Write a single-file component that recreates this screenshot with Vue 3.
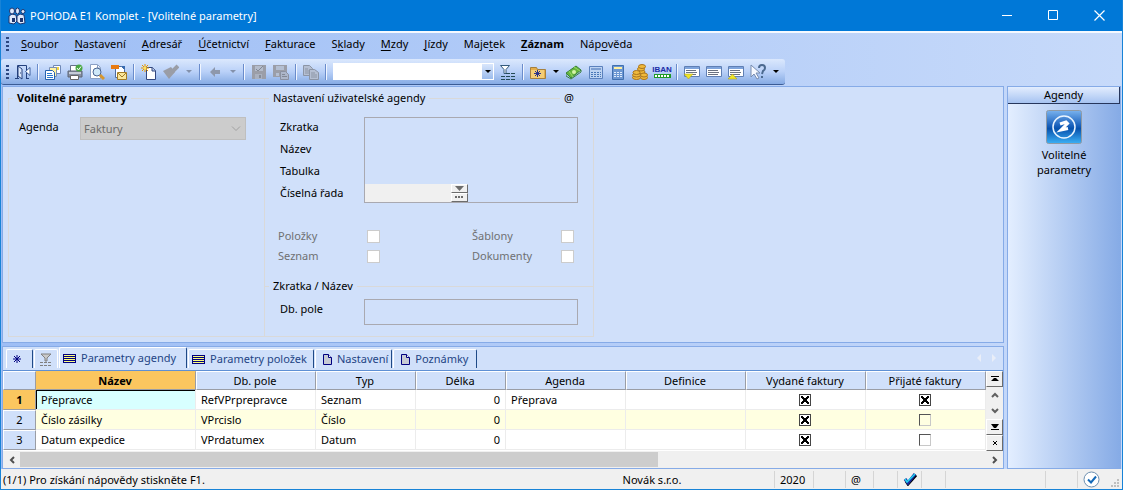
<script setup>
import { ref } from 'vue'

const menu = [
  ['', 'S', 'oubor'], ['', 'N', 'astavení'], ['', 'A', 'dresář'], ['', 'Ú', 'četnictví'],
  ['', 'F', 'akturace'], ['S', 'k', 'lady'], ['', 'M', 'zdy'], ['', 'J', 'ízdy'],
  ['Maje', 't', 'ek'], ['', 'Z', 'áznam'], ['Náp', 'o', 'věda'],
]

const lines = '<path d="M.5 2.500h15v10H.5z" fill="#fff" stroke="#5f7fb4"/><path d="M1 3h14v2H1z" fill="#7fa4dc"/><path d="M2 6.500h10M2 8.500h11M2 10.500h10" stroke="#6b7280"/>'
const icons = {
  exit: '<path d="M0 14.500h4M11 14.500h3M2.500 14V1.500h9V14" fill="none" stroke="#24407c"/><path d="M3 2l4 3v10l-4-3z" fill="#dce8fb" stroke="#24407c"/><path d="M10.500 7.500L15 3.500v8z" fill="#fff" stroke="#3d5f9c"/><path d="M5 9h1" stroke="#24407c"/>',
  copies: '<path d="M8.500 1.500h7v8h-7z" fill="#fff" stroke="#6f88b5"/><path d="M10 3h4v3h-4z" fill="#f3d43c"/><path d="M4.500 3.500h7v9h-7z" fill="#fff3a0" stroke="#7a90b8"/><path d="M.5 6.500h7l2 2v7h-9z" fill="#fff" stroke="#2461ae"/><path d="M2 9.500h5M2 11.500h6M2 13.500h6" stroke="#2878cf"/>',
  print: '<path d="M3.500 1.500h8v6h-8z" fill="#fff" stroke="#66718a"/><path d="M1 7h14v6H1z" fill="#8790a3" stroke="#5c6474"/><path d="M2 8h12v2H2z" fill="#c6ccd8"/><path d="M3.500 11.500h8v4h-8z" fill="#fff" stroke="#666"/><circle cx="12" cy="4" r="3.500" fill="#49a744"/><path d="M10 4l1.500 2L14 2.500" fill="none" stroke="#fff"/>',
  preview: '<path d="M1.500.5h7l3 3v11h-10z" fill="#fff" stroke="#8ba0c4"/><path d="M8.500 1v3h3" fill="none" stroke="#8ba0c4"/><circle cx="8" cy="8" r="4" fill="#cfe8f8" stroke="#4b6592"/><path d="M11 11l4 4" stroke="#d6962d" stroke-width="3"/>',
  mail: '<path d="M4.500 2.500h6l3 3v8h-9z" fill="#fff" stroke="#4b6aa0"/><path d="M0 1h8v4H0z" fill="#e87b12"/><path d="M10 2l4 4v-4z" fill="#376bb1"/><path d="M6.500 8.500h9v7h-9z" fill="#f9e69c" stroke="#a47c24"/><path d="M7 9l4 4 4-4" fill="none" stroke="#a47c24"/>',
  fresh: '<path d="M5.500 3.500h6l3 3v9h-9z" fill="#fff" stroke="#33477f"/><path d="M11 3v4h3.500" fill="#b7c9ea" stroke="#33477f"/><path d="M4 0v8M0 4h8M1 1l6 6M7 1L1 7" stroke="#e69600"/><circle cx="4" cy="4" r="1.500" fill="#ffe35a"/>',
  brush: '<path d="M0 7l8-4 4 5-6 7z" fill="#9a9da6"/><path d="M9 8l6-6" stroke="#9a9da6" stroke-width="4"/>',
  back: '<path d="M3 8l5-5v3h5v4H8v3z" fill="#8e98ac"/>',
  save: '<path d="M1 1h14v14H1z" fill="#9b9ea8"/><path d="M4 2h8v5H4z" fill="#b4bccb"/><path d="M5 5l2 2 5-5" fill="none" stroke="#828894"/><path d="M4 10h7v5H4z" fill="#aab1bf"/><path d="M8 11h2v3H8z" fill="#868c98"/>',
  saveall: '<path d="M0 1h14v12H0z" fill="#9b9ea8"/><path d="M3 2h8v4H3zM3 9h3v3H3z" fill="#b4bfd2"/><path d="M7.500 7.500h5l3 3v5h-8z" fill="#adb6c9" stroke="#8b91a0"/><path d="M9 10.500h3M9 12.500h5" stroke="#828895"/>',
  copy: '<path d="M.5 1.500h6l3 3v7h-9z" fill="#b5bfd2" stroke="#8c95a5"/><path d="M6.500 5.500h5l4 3v7h-9z" fill="#b5bfd2" stroke="#8c95a5"/><path d="M2 5h3M2 7h4M2 9h4M8 9h4M8 11h6M8 13h6" stroke="#8c95a5"/>',
  filter: '<path d="M.5 1.500h9l-3.500 4v4H4V5.500z" fill="#fff" stroke="#355b7c"/><path d="M6 9.500h10M1 12.500h15M1 15.500h15" stroke="#244a55" stroke-dasharray="4 1"/>',
  folder: '<path d="M.5 3.500h6l1 2h8v9H.5z" fill="#e5ae4a" stroke="#a5803f"/><path d="M1 6h13v8H1z" fill="#f3cd76"/><path d="M7.500 6v7M4 9.500h7M5 7l5 5M10 7l-5 5" stroke="#27308a"/>',
  money: '<path d="M0 9L10 2l5 4-10 8z" fill="#65b53d" stroke="#398338"/><path d="M0 10v2l5 3 10-7V6" fill="none" stroke="#39803c"/><circle cx="8" cy="8" r="2" fill="#d5f3a7"/><path d="M3 7l4 6M8 3l6 4" stroke="#99d968"/>',
  calc: '<path d="M1.500 2.500h13v12h-13z" fill="#bdd3f2" stroke="#5b81bd"/><path d="M3 5h10" stroke="#7d9fd2" stroke-width="2"/><path d="M3 8.500h10M3 10.500h10M3 12.500h10" stroke="#4a78b8" stroke-dasharray="2 1"/>',
  calc2: '<path d="M2.500 1.500h11v14h-11z" fill="#6b96d2" stroke="#4070b0"/><path d="M4 4h8" stroke="#fff0a0" stroke-width="2"/><path d="M4 8.500h8M4 10.500h8M4 12.500h8" stroke="#e2eefc" stroke-dasharray="2 1"/>',
  coins: '<g fill="#f0b93a" stroke="#a9741c"><ellipse cx="10" cy="8" rx="3" ry="2"/><ellipse cx="9" cy="5" rx="3.500" ry="2"/><ellipse cx="10" cy="2.500" rx="3.500" ry="2"/><ellipse cx="4.500" cy="13.500" rx="4" ry="2"/><ellipse cx="4.500" cy="11" rx="4" ry="2"/><ellipse cx="4.500" cy="8.500" rx="3.500" ry="2"/><ellipse cx="12" cy="13.500" rx="3.500" ry="2"/><ellipse cx="12" cy="11" rx="3.500" ry="2"/></g>',
  below: lines + '<path d="M0 10h9l-4.500 5z" fill="#efe526" stroke="#a6991a" stroke-width=".5"/>',
  window: lines,
  above: lines + '<path d="M0 15h9l-4.500-5z" fill="#efe526" stroke="#a6991a" stroke-width=".5"/>',
  help: '<path d="M1 1v12l3-3 3 5 2-1-3-5h4z" fill="#f6f9ff" stroke="#778caf"/><path d="M9 4q0-3 3-3t3 3q0 2-2 3l-1 3M12 12v2" fill="none" stroke="#4c6a90" stroke-width="2"/>',
}

const tools = [
  'exit', '|', 'copies', 'print', 'preview', 'mail', '|', 'fresh', 'brush', 'v-', '|', 'back', 'v-', '|',
  'save', 'saveall', '|', 'copy', '|', 'combo', 'filter', '|', 'folder', 'v', 'money', 'calc', 'calc2',
  'coins', 'iban', '|', 'below', 'window', 'above', 'help', 'v',
]
const toolNames = {
  exit: 'Konec', copies: 'Kopie', print: 'Tisk', preview: 'Náhled', mail: 'Odeslat', fresh: 'Nový', brush: 'Formát',
  back: 'Zpět', save: 'Uložit', saveall: 'Uložit vše', copy: 'Kopírovat', filter: 'Filtr', folder: 'Složka',
  money: 'Peníze', calc: 'Kalkulačka', calc2: 'Výpočet', coins: 'Mince', below: 'Dolů', window: 'Okno', above: 'Nahoru', help: 'Nápověda',
}

const tabs = [
  { text: 'Parametry agendy', icon: 'grid', active: true },
  { text: 'Parametry položek', icon: 'grid' },
  { text: 'Nastavení', icon: 'page', tight: true },
  { text: 'Poznámky', icon: 'page' },
]
const columns = ['Název', 'Db. pole', 'Typ', 'Délka', 'Agenda', 'Definice', 'Vydané faktury', 'Přijaté faktury']
const rows = ref([
  { name: 'Přepravce', field: 'RefVPrprepravce', type: 'Seznam', len: 0, agenda: 'Přeprava', issued: true, received: true },
  { name: 'Číslo zásilky', field: 'VPrcislo', type: 'Číslo', len: 0, agenda: '', issued: true, received: false },
  { name: 'Datum expedice', field: 'VPrdatumex', type: 'Datum', len: 0, agenda: '', issued: true, received: false },
])
const search = ref('')
</script>

<template>
  <div class="window">
    <header class="title">
      <svg class="logo" width="18" height="18" viewBox="0 0 18 18">
        <g fill="#dfeafc" stroke="#1d356f"><path d="M1 9l3-2 4 1 1 6-3 3-5-1z"/><path d="M9 9l3-2 4 1 1 8-5 1-3-2z"/><ellipse cx="4" cy="4" rx="2.500" ry="3"/><ellipse cx="9.500" cy="4" rx="2" ry="3"/><circle cx="15" cy="4.500" r="2"/></g>
        <path d="M4 11h3v4H4zM12 11h3v4h-3z" fill="#1d356f"/>
      </svg>
      <h1>POHODA E1 Komplet - [Volitelné parametry]</h1>
      <button class="cap" aria-label="Minimalizovat"><svg width="11" height="11"><path d="M0 5.500h10" stroke="#fff"/></svg></button>
      <button class="cap" aria-label="Maximalizovat"><svg width="11" height="11"><path d="M.5.5h9v9h-9z" stroke="#fff" fill="none"/></svg></button>
      <button class="cap" aria-label="Zavřít"><svg width="11" height="11"><path d="M.5.5l10 10M10.500.5l-10 10" stroke="#fff" stroke-width="1.200"/></svg></button>
    </header>

    <div class="shell">
      <nav class="menu">
        <span class="grip"></span>
        <button v-for="m in menu" :key="m.join('')" :class="{ strong: m[1] === 'Z' }">{{ m[0] }}<u>{{ m[1] }}</u>{{ m[2] }}</button>
      </nav>

      <div class="toolbar">
        <span class="grip"></span>
        <template v-for="(t, i) in tools" :key="i">
          <span v-if="t === '|'" class="sep"></span>
          <button v-else-if="t[0] === 'v'" class="drop" :class="{ dim: t === 'v-' }" aria-label="Rozbalit"><i class="caret"></i></button>
          <span v-else-if="t === 'combo'" class="combo">
            <input v-model="search" type="text" aria-label="Hledat">
            <button aria-label="Historie hledání"><i class="caret"></i></button>
          </span>
          <button v-else-if="t === 'iban'" class="tool iban"><span>IBAN</span><i></i></button>
          <button v-else class="tool" :aria-label="toolNames[t]"><svg width="16" height="16" viewBox="0 0 16 16" v-html="icons[t]"></svg></button>
        </template>
      </div>

      <main class="body">
        <div class="left">
          <section class="panel form">
            <div class="group first">
              <div class="head"><b>Volitelné parametry</b></div>
              <div class="agenda">
                <label for="agenda">Agenda</label>
                <span class="select">
                  <select id="agenda" disabled><option>Faktury</option></select>
                  <svg width="10" height="6"><path d="M1 .5l4 4 4-4" fill="none" stroke="#a0a0a0"/></svg>
                </span>
              </div>
            </div>
            <div class="group second">
              <div class="head"><span>Nastavení uživatelské agendy</span><span class="at">@</span></div>
              <div class="fields">
                <div class="labels">
                  <label for="zkratka">Zkratka</label><label for="nazev">Název</label>
                  <label for="tabulka">Tabulka</label><label for="rada">Číselná řada</label>
                </div>
                <div class="box">
                  <input id="zkratka" type="text" disabled><input id="nazev" type="text" disabled><input id="tabulka" type="text" disabled>
                  <div class="series">
                    <input id="rada" type="text" disabled>
                    <span class="spin">
                      <button aria-label="Seznam řad"><svg width="9" height="5"><path d="M0 0h9L4.500 5z" fill="#6c6c6c"/></svg></button>
                      <button aria-label="Vybrat řadu"><svg width="9" height="3"><path d="M0 0h2v2H0zM3 0h2v2H3zM6 0h2v2H6z" fill="#6c6c6c"/></svg></button>
                    </span>
                  </div>
                </div>
              </div>
              <div class="checks">
                <label for="c1">Položky</label><input id="c1" type="checkbox" disabled>
                <label for="c2">Šablony</label><input id="c2" type="checkbox" disabled>
                <label for="c3">Seznam</label><input id="c3" type="checkbox" disabled>
                <label for="c4">Dokumenty</label><input id="c4" type="checkbox" disabled>
              </div>
              <div class="head sub"><span>Zkratka / Název</span></div>
              <div class="dbfield"><label for="db">Db. pole</label><input id="db" type="text" disabled></div>
            </div>
          </section>

          <section class="panel list">
            <div class="tabs">
              <button class="tab star" aria-label="Nový záznam"><svg width="8" height="8"><path d="M4 0v8M0 4h8M1 1l6 6M7 1L1 7" stroke="#000080"/></svg></button>
              <button class="tab funnel" aria-label="Filtr"><svg width="12" height="13"><path d="M1 1h10L7 5v3H5V5z" fill="#c9c9c9" stroke="#808080"/><path d="M0 9.500h12M0 12.500h12" stroke="#808080" stroke-dasharray="3 1"/></svg></button>
              <button v-for="t in tabs" :key="t.text" class="tab named" :class="[t.icon, { active: t.active, tight: t.tight }]">
                <svg v-if="t.icon === 'grid'" width="13" height="9"><path d="M0 0h13v9H0z" fill="#000080"/><path d="M1 1.500h11M1 3.500h11M1 5.500h11M1 7.500h11" stroke="#ffff80"/></svg>
                <svg v-else width="9" height="11"><path d="M.5.5h5l3 3v7h-8z" fill="#c6cad4" stroke="#000080"/><path d="M5.500.5v3h3" fill="#fff" stroke="#000080"/></svg>
                {{ t.text }}
              </button>
              <span class="pager"><i class="prev"></i><i class="next"></i></span>
            </div>
            <div class="gridwrap">
              <div class="scrollx">
                <table>
                  <colgroup><col class="w33"><col class="w160"><col class="w120"><col class="w100"><col class="w90"><col class="w120"><col class="w120"><col class="w120"><col class="w120"></colgroup>
                  <thead><tr><th></th><th v-for="c in columns" :key="c" :class="{ sorted: c === 'Název' }">{{ c }}</th></tr></thead>
                  <tbody>
                    <tr v-for="(r, i) in rows" :key="r.field">
                      <th :class="{ current: i === 0 }">{{ i + 1 }}</th>
                      <td :class="{ focus: i === 0 }">{{ r.name }}</td><td>{{ r.field }}</td><td>{{ r.type }}</td>
                      <td class="num">{{ r.len }}</td><td>{{ r.agenda }}</td><td></td>
                      <td class="tick"><input v-model="r.issued" type="checkbox" :aria-label="'Vydané faktury, ' + r.name"></td>
                      <td class="tick"><input v-model="r.received" type="checkbox" :aria-label="'Přijaté faktury, ' + r.name"></td>
                    </tr>
                  </tbody>
                </table>
              </div>
              <div class="vbar">
                <button class="raised" aria-label="První"><svg width="8" height="6"><path d="M0 0h8v1H0zM3 2h2l3 3H0z"/></svg></button>
                <button aria-label="Nahoru"><svg width="8" height="6"><path d="M1 5l3-3 3 3" fill="none" stroke="#606060" stroke-width="2"/></svg></button>
                <button aria-label="Dolů"><svg width="8" height="6"><path d="M1 1l3 3 3-3" fill="none" stroke="#606060" stroke-width="2"/></svg></button>
                <button class="raised" aria-label="Poslední"><svg width="8" height="6"><path d="M0 5h8v1H0zM0 0h8L5 4H3z"/></svg></button>
                <button class="raised" aria-label="Nový"><svg width="4" height="4"><path d="M0 0l4 4M4 0L0 4" stroke="#000"/></svg></button>
              </div>
            </div>
            <div class="hbar">
              <button aria-label="Vlevo"><svg width="6" height="8"><path d="M5 1L2 4l3 3" fill="none" stroke="#505050" stroke-width="2"/></svg></button>
              <span class="track"><i class="thumb"></i></span>
              <button aria-label="Vpravo"><svg width="6" height="8"><path d="M1 1l3 3-3 3" fill="none" stroke="#505050" stroke-width="2"/></svg></button>
            </div>
          </section>
        </div>

        <aside class="side">
          <h2>Agendy</h2>
          <button class="shortcut">
            <svg width="36" height="34" viewBox="0 0 36 34">
              <defs>
                <linearGradient id="tile" x1="0" y1="0" x2="0" y2="1"><stop offset="0" stop-color="#79b2ee"/><stop offset=".45" stop-color="#1b62bd"/><stop offset=".55" stop-color="#0752ae"/><stop offset="1" stop-color="#3bb0f5"/></linearGradient>
              </defs>
              <rect x=".5" y=".5" width="35" height="33" rx="2" fill="url(#tile)" stroke="#8e9aa6"/>
              <circle cx="18" cy="17" r="11" fill="none" stroke="#e9f4ff" stroke-width="1.500"/>
              <path d="M14 14l6-2 1.500 1.500-6.500 6.500 7-1.500" fill="none" stroke="#fff" stroke-width="3"/>
            </svg>
            <span>Volitelné<br>parametry</span>
          </button>
        </aside>
      </main>
    </div>

    <footer class="status">
      <span class="msg">(1/1) Pro získání nápovědy stiskněte F1.</span>
      <span class="company">Novák s.r.o.</span><span>2020</span><span></span><span>@</span><span></span>
      <span><svg width="14" height="13"><path d="M3 8l2 3 8-9" fill="none" stroke="#000" stroke-width="3"/><path d="M2 6l3 4 7-9" fill="none" stroke="#16299c" stroke-width="3"/><path d="M2 6l2 3 8-8" fill="none" stroke="#21d6f2" stroke-width="1.500"/></svg></span>
      <span></span><span></span><span></span>
      <span><svg width="17" height="17"><circle cx="8.500" cy="8.500" r="7.500" fill="#fff" stroke="#6d8fb0"/><path d="M5 8.500l3 3 5-6" fill="none" stroke="#1469b8" stroke-width="2"/></svg></span>
      <span class="size"><svg width="9" height="9"><path d="M6 0h2v2H6zM3 3h2v2H3zM6 3h2v2H6zM0 6h2v2H0zM3 6h2v2H3zM6 6h2v2H6z" fill="#bfbfbf"/></svg></span>
    </footer>
  </div>
</template>

<style>
body { margin: 0; }
</style>

<style scoped>
* { box-sizing: border-box; }
.window { min-height: 100vh; display: flex; flex-direction: column; border: 1px solid #1883d7; border-top: 0; background: #f0f0f0; font: 11px/14px "Noto Sans", "Open Sans", sans-serif; color: #000; }
button { font: inherit; color: inherit; background: none; border: 0; padding: 0; margin: 0; display: flex; align-items: center; justify-content: center; }
input { font: inherit; margin: 0; }
.title { height: 31px; flex: none; background: #0078d7; color: #fff; display: flex; align-items: center; }
.logo { margin: 0 4px 0 7px; }
.title h1 { margin: 0; font-size: 11px; font-weight: 400; flex: 1; }
.cap { width: 46px; height: 31px; }
.shell { flex: 1; display: flex; flex-direction: column; border-top: 2px solid #f5f9ff; background: linear-gradient(90deg, #9ebef5, #c7dafa); }
.menu { height: 26px; display: flex; align-items: center; gap: 16px; padding: 0 0 4px 5px; }
.menu .strong { font-weight: 700; }
.menu button { display: block; }
.menu u { text-underline-offset: 2px; }
.grip { width: 3px; height: 14px; background: repeating-linear-gradient(#2c4780 0 2px, transparent 2px 4px); }
.menu .grip { margin-right: -4px; }
.toolbar { align-self: flex-start; height: 26px; display: flex; align-items: center; border-radius: 3px; border-bottom: 1px solid #3b5c95; padding: 0 2px 0 5px; background: linear-gradient(#dbe8fd, #bad1f8 50%, #86abe4); }
.toolbar .grip { margin-right: 3px; }
.tool { width: 22px; height: 22px; }
.drop { width: 14px; height: 22px; }
.caret { width: 0; height: 0; border: 3px solid transparent; border-top-color: #000; border-bottom: 0; }
.dim .caret { border-top-color: #8391ab; }
.sep { width: 8px; height: 16px; background: linear-gradient(90deg, transparent 3px, #6a8ccb 3px 4px, #f1f6ff 4px 5px, transparent 5px); }
.combo { width: 161px; height: 17px; margin: 0 3px; display: flex; background: #fff; }
.combo input { border: 0; flex: 1; min-width: 0; background: #fff; padding: 0 3px; }
.combo button { width: 13px; border: 1px solid #fff; background: linear-gradient(#d9e6fc, #9cbcec); }
.iban { flex-direction: column; color: #1b2ba6; font: 700 8px/9px "Liberation Sans Narrow", "Liberation Sans", sans-serif; }
.iban i { width: 17px; height: 4px; border: 1px solid #1e9a26; background: repeating-linear-gradient(90deg, #fff 0 2px, #1e9a26 2px 3px); }
.body { flex: 1; display: flex; gap: 3px; padding: 1px 1px 0; }
.left { flex: 1; min-width: 0; display: flex; flex-direction: column; gap: 3px; }
.panel { border: 1px solid #86abe7; background: #d0e0fa; }
.form { flex: 1; display: flex; align-items: stretch; padding: 11px 6px 5px 5px; }
.group { border: 1px solid #d9d9d9; border-top: 0; }
.first { width: 256px; border-right: 0; }
.second { width: 330px; }
.head { display: flex; align-items: center; gap: 4px; height: 14px; margin-top: -7px; }
.head::before { content: ""; width: 4px; height: 1px; background: #d9d9d9; }
.head::after { content: ""; flex: 1; height: 1px; background: #d9d9d9; }
.head .at { order: 2; }
.second .head:not(.sub)::after { order: 1; }
.at { margin-right: 19px; }
.agenda { display: flex; align-items: center; margin: 12px 0 0 10px; }
.agenda label { width: 61px; margin-top: -3px; }
.select { display: flex; align-items: center; width: 166px; height: 23px; background: #ccc; border: 1px solid #bfbfbf; padding-right: 4px; }
.select select { appearance: none; flex: 1; border: 0; background: none; font: inherit; color: #6d6d6d; opacity: 1; padding: 0 3px; }
.fields { display: flex; margin: 11px 0 0 15px; }
.labels { width: 84px; display: grid; grid-auto-rows: 22px; align-items: center; }
.box { width: 214px; height: 86px; margin-top: 1px; border: 1px solid #a9a9b0; display: flex; flex-direction: column; }
.box > input { height: 22px; border: 0; background: none; padding: 0 4px; }
.series { display: flex; flex: 1; }
.series input { width: 86px; border: 0; background: #f0f0f0; }
.spin { display: flex; flex-direction: column; width: 17px; }
.spin button { flex: 1; background: #f0f0f0; border: 1px solid #fff; border-right-color: #6c6c6c; border-bottom-color: #6c6c6c; }
.checks { display: grid; grid-template-columns: 89px 105px 89px 13px; grid-auto-rows: 20px; align-items: center; margin: 22px 0 0 13px; color: #6f7072; }
.checks input { appearance: none; width: 13px; height: 13px; background: #fff; border: 1px solid #ccc; }
.head.sub { margin-top: 13px; }
.dbfield { display: flex; align-items: flex-start; margin: 6px 0 0 15px; }
.dbfield label { width: 84px; margin-top: 3px; }
.dbfield input { width: 214px; height: 26px; border: 1px solid #a9a9b0; background: none; }
.tabs { height: 24px; display: flex; align-items: flex-end; gap: 1px; padding: 0 7px 0 3px; border-bottom: 1px solid #5f90d4; color: #1f4585; }
.tab { height: 19px; margin-bottom: 2px; border: 1px solid #fff; border-bottom: 0; border-right: 1px solid #1f4a87; border-radius: 2px 2px 0 0; }
.star { width: 27px; padding-right: 6px; }
.funnel { width: 24px; border-right-color: #fff; }
.named { gap: 5px; padding: 0 6px 0 3px; }
.named.page { padding: 0 8px 0 7px; }
.named.tight { padding: 0 3px 0 7px; }
.named.active { height: 21px; padding: 0 10px 0 3px; }
.pager { margin: 0 0 8px auto; display: flex; gap: 11px; }
.pager i { border: 4px solid transparent; }
.pager .prev { border-left: 0; border-right-color: #e9eef8; }
.pager .next { border-right: 0; border-left-color: #e9eef8; }
.gridwrap { display: flex; background: #fff; }
.scrollx { flex: 1; min-width: 0; overflow: hidden; background: #fff; }
table { border-collapse: separate; border-spacing: 0; table-layout: fixed; width: 983px; }
.w33 { width: 33px; } .w160 { width: 160px; } .w120 { width: 120px; } .w100 { width: 100px; } .w90 { width: 90px; }
th { height: 20px; padding: 0; font-weight: 400; text-align: center; background: #d0e0fa; border: 1px solid #fff; border-right-color: #9a9da5; border-bottom-color: #9a9da5; }
thead th { height: 19px; padding-right: 2px; }
th.sorted, th.current { background: #fbc65f; font-weight: 700; border-top-color: #fbc65f; border-left-color: #fbc65f; }
td { height: 20px; padding: 0 5px; border-right: 1px solid #ececec; border-bottom: 1px solid #ececec; white-space: nowrap; overflow: hidden; }
tbody tr:nth-child(even) td { background: #ffffe1; }
td.focus { background: #d8ffff; box-shadow: inset 1px 1px #000; }
.num { text-align: right; }
.tick { text-align: center; line-height: 0; padding-right: 7px; }
.tick input { appearance: none; width: 12px; height: 12px; border: 1px solid #555; border-right-color: #c8c8c8; border-bottom-color: #c8c8c8; background-color: transparent; }
.tick input:checked { border-color: #444; background: linear-gradient(45deg, transparent 40%, #000 40% 60%, transparent 60%) center / 8px 8px no-repeat, linear-gradient(-45deg, transparent 40%, #000 40% 60%, transparent 60%) center / 8px 8px no-repeat, #fff; }
.vbar { width: 17px; background: #f0f0f0; display: flex; flex-direction: column; }
.vbar button { height: 16px; }
.raised { border: 1px solid #fff; border-right-color: #6c6c6c; border-bottom-color: #6c6c6c; background: #f0f0f0; }
.hbar { height: 17px; display: flex; background: #f0f0f0; }
.hbar button { width: 17px; }
.track { flex: 1; padding: 1px 0; display: flex; }
.thumb { width: 66%; background: #cdcdcd; }
.side { width: 114px; border: 1px solid #86abe7; background: linear-gradient(90deg, #e3eeff, #86abe6); }
.side h2 { margin: 0; height: 17px; font-size: 11px; line-height: 16px; font-weight: 400; text-align: center; background: linear-gradient(#e3edfe, #a6c3f1); border-right: 1px solid #26365c; border-bottom: 1px solid #26365c; }
.shortcut { flex-direction: column; width: 100%; margin-top: 6px; line-height: 15px; gap: 3px; }
.status { min-height: 20px; display: grid; grid-template-columns: 1fr 244px 39px 32px 28px 24px 24px 24px 100px 32px 28px 17px; align-items: center; padding: 2px 0 1px; }
.status span { display: flex; align-items: center; height: 17px; padding-left: 5px; border-left: 1px solid #d5d5d5; }
.status .msg, .status .company, .status .size { border-left: 0; }
.status .company { justify-content: center; padding: 0; }
.status .msg { padding-left: 2px; white-space: nowrap; }
.status .size { align-items: flex-end; justify-content: flex-end; padding-right: 2px; }
</style>
